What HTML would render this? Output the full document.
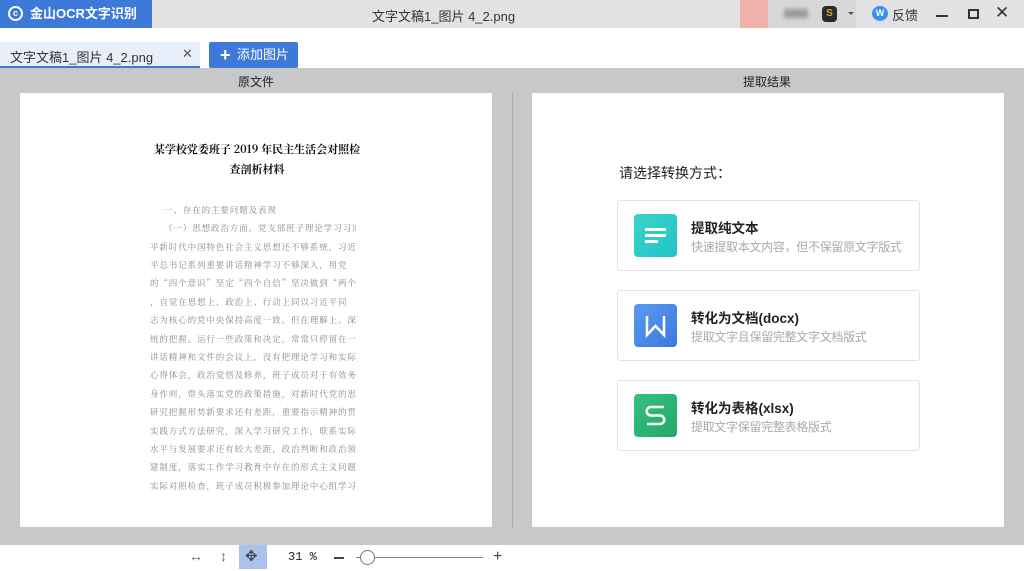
<!DOCTYPE html>
<html><head><meta charset="utf-8"><style>
*{margin:0;padding:0;box-sizing:border-box}
body{width:1024px;height:571px;overflow:hidden;background:#c8c8c8;font-family:"Liberation Sans","Noto Sans CJK SC",sans-serif;position:relative}
.a{position:absolute}
.card{position:absolute;left:617px;width:303px;height:71px;background:#fff;border:1px solid #e4e4e4;border-radius:3px}
.ic{position:absolute;left:16px;top:13px;width:43px;height:43px;border-radius:4px}
.t1{position:absolute;left:73px;top:16px;font-size:13.5px;font-weight:bold;color:#222}
.t2{position:absolute;left:73px;top:37px;font-size:12px;color:#aaa;letter-spacing:-0.3px}
.ln{position:absolute;left:150px;width:206px;font-size:8.5px;color:#888;white-space:nowrap;overflow:hidden;letter-spacing:0.9px;font-family:"Noto Serif CJK SC",serif;line-height:12px}
</style></head><body>
<div class="a" style="left:0;top:0;width:1024px;height:28px;background:#e2e2e5"></div>
<div class="a" style="left:0;top:0;width:152px;height:28px;background:#3d79d9;color:#fff;font-size:13px;font-weight:bold;line-height:28px;padding-left:30px">金山OCR文字识别</div>
<div class="a" style="left:8px;top:6px;width:15px;height:15px;border:2px solid #fff;border-radius:50%;color:#fff;font-size:9px;line-height:11px;text-align:center;font-weight:bold">c</div>
<div class="a" style="left:372px;top:6px;font-size:13px;color:#333">文字文稿1_图片 4_2.png</div>
<div class="a" style="left:740px;top:0;width:28px;height:28px;background:#eeb1ac"></div>
<div class="a" style="left:768px;top:0;width:88px;height:28px;background:#d7d7d9"></div>
<div class="a" style="left:784px;top:9px;width:24px;height:9px;background:#9a9a9a;filter:blur(2px)"></div>
<div class="a" style="left:822px;top:6px;width:15px;height:16px;background:#2a2a2a;border-radius:4px;color:#e0a040;font-size:10px;text-align:center;line-height:16px;font-weight:bold">S</div>
<div class="a" style="left:848px;top:12px;border-left:3px solid transparent;border-right:3px solid transparent;border-top:3px solid #555"></div>
<div class="a" style="left:872px;top:6px;width:16px;height:15px;background:#3d8fe8;border-radius:50%;color:#fff;font-size:9px;text-align:center;line-height:15px;font-weight:bold">W</div>
<div class="a" style="left:892px;top:5px;font-size:13px;color:#333">反馈</div>
<div class="a" style="left:936px;top:15px;width:12px;height:2px;background:#333"></div>
<div class="a" style="left:968px;top:9px;width:11px;height:10px;border:2px solid #333"></div>
<div class="a" style="left:995px;top:3px;font-size:17px;color:#333">✕</div>
<div class="a" style="left:0;top:28px;width:1024px;height:40px;background:#fff"></div>
<div class="a" style="left:0;top:42px;width:200px;height:26px;background:#e8eefa;border-bottom:2px solid #3d79d9"></div>
<div class="a" style="left:10px;top:47px;font-size:13px;color:#333">文字文稿1_图片 4_2.png</div>
<div class="a" style="left:182px;top:46px;font-size:13px;color:#555">✕</div>
<div class="a" style="left:209px;top:42px;width:89px;height:26px;background:#3d79d9;border-radius:2px;color:#fff;font-size:13px;line-height:26px;padding-left:28px">添加图片</div>
<div class="a" style="left:220px;top:47px;font-size:18px;color:#fff;line-height:16px;font-weight:bold">+</div>
<div class="a" style="left:238px;top:73px;font-size:12px;color:#222">原文件</div>
<div class="a" style="left:743px;top:73px;font-size:12px;color:#222">提取结果</div>
<div class="a" style="left:20px;top:93px;width:472px;height:434px;background:#fff"></div>
<div class="a" style="left:512px;top:93px;width:1px;height:434px;background:#aaa"></div>
<div class="a" style="left:532px;top:93px;width:472px;height:434px;background:#fff"></div>
<div class="a" style="left:130px;top:139px;width:254px;text-align:center;font-size:11px;font-weight:bold;color:#111;font-family:'Noto Serif CJK SC',serif;line-height:20px;white-space:nowrap">某学校党委班子 2019 年民主生活会对照检<br>查剖析材料</div>
<div class="ln" style="top:204px;padding-left:14px">一、存在的主要问题及表现</div>
<div class="ln" style="top:222px;padding-left:14px">（一）思想政治方面。党支部班子理论学习习近</div>
<div class="ln" style="top:241px">平新时代中国特色社会主义思想还不够系统，习近</div>
<div class="ln" style="top:259px">平总书记系列重要讲话精神学习不够深入，用党</div>
<div class="ln" style="top:277px">的“四个意识”坚定“四个自信”坚决做到“两个维护”</div>
<div class="ln" style="top:296px">，自觉在思想上、政治上、行动上同以习近平同</div>
<div class="ln" style="top:314px">志为核心的党中央保持高度一致。但在理解上、深刻</div>
<div class="ln" style="top:333px">统的把握。运行一些政策和决定，常常只停留在一遍</div>
<div class="ln" style="top:351px">讲话精神和文件的会议上，没有把理论学习和实际</div>
<div class="ln" style="top:369px">心得体会，政治觉悟及修养，班子成员对于有效务</div>
<div class="ln" style="top:388px">身作则，带头落实党的政策措施，对新时代党的思</div>
<div class="ln" style="top:406px">研究把握形势新要求还有差距，重要指示精神的贯</div>
<div class="ln" style="top:425px">实践方式方法研究，深入学习研究工作，联系实际</div>
<div class="ln" style="top:443px">水平与发展要求还有较大差距，政治判断和政治领</div>
<div class="ln" style="top:461px">建制度，落实工作学习教育中存在的形式主义问题</div>
<div class="ln" style="top:480px">实际对照检查，班子成员积极参加理论中心组学习</div>
<div class="a" style="left:619px;top:163px;font-size:14px;color:#222">请选择转换方式：</div>
<div class="card" style="top:200px"><div class="ic" style="background:linear-gradient(135deg,#3ad4c8,#22c2c8)"><div class="a" style="left:11px;top:14px;width:21px;height:2.5px;background:#fff"></div><div class="a" style="left:11px;top:20px;width:21px;height:2.5px;background:#fff"></div><div class="a" style="left:11px;top:26px;width:13px;height:2.5px;background:#fff"></div></div><div class="t1">提取纯文本</div><div class="t2">快速提取本文内容，但不保留原文字版式</div></div>
<div class="card" style="top:290px"><div class="ic" style="background:linear-gradient(135deg,#5b9af0,#3b78e0)"><svg class="a" style="left:0;top:0" width="43" height="43"><path d="M13 12V31L21.5 22L30 31V12" fill="none" stroke="#fff" stroke-width="2.5" stroke-linejoin="miter"/></svg></div><div class="t1">转化为文档(docx)</div><div class="t2">提取文字且保留完整文字文档版式</div></div>
<div class="card" style="top:380px"><div class="ic" style="background:linear-gradient(135deg,#34c27e,#22a868)"><svg class="a" style="left:0;top:0" width="43" height="43"><path d="M30 13H17a4 4 0 0 0 0 8.5H26a4 4 0 0 1 0 8.5H13" fill="none" stroke="#fff" stroke-width="2.5"/></svg></div><div class="t1">转化为表格(xlsx)</div><div class="t2">提取文字保留完整表格版式</div></div>
<div class="a" style="left:0;top:545px;width:1024px;height:26px;background:#fff"></div>
<div class="a" style="left:239px;top:545px;width:28px;height:24px;background:#a9c3ea"></div>
<div class="a" style="left:189px;top:548px;font-size:14px;color:#666">↔</div>
<div class="a" style="left:220px;top:548px;font-size:14px;color:#666">↕</div>
<div class="a" style="left:245px;top:547px;font-size:15px;color:#445">✥</div>
<div class="a" style="left:288px;top:550px;font-size:12px;color:#222;font-family:'Liberation Mono',monospace">31 %</div>
<div class="a" style="left:334px;top:557px;width:10px;height:1.5px;background:#444"></div>
<div class="a" style="left:356px;top:557px;width:127px;height:1px;background:#888"></div>
<div class="a" style="left:360px;top:550px;width:15px;height:15px;border:1px solid #777;border-radius:50%;background:#fff"></div>
<div class="a" style="left:493px;top:548px;font-size:16px;color:#444;line-height:18px">+</div>
</body></html>
